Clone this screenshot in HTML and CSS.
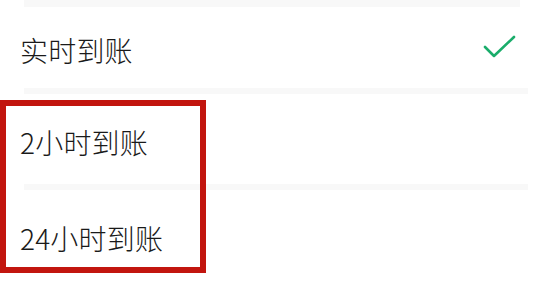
FILE: index.html
```html
<!DOCTYPE html>
<html lang="zh">
<head>
<meta charset="utf-8">
<link rel="stylesheet" href="styles.css">
</head>
<body>
<div class="page">
  <div class="sep sep-top"></div>
  <div class="row row-first">
    <span class="label">实时到账</span>
    <svg class="check" width="34" height="24" viewBox="0 0 34 24"><path d="M3 12 L12 21 L32 2" fill="none" stroke="#1aad6b" stroke-width="2.6" stroke-linecap="round" stroke-linejoin="round"/></svg>
  </div>
  <div class="sep sep-wide"></div>
  <div class="row">
    <span class="label">2小时到账</span>
  </div>
  <div class="sep sep-wide"></div>
  <div class="row">
    <span class="label">24小时到账</span>
  </div>
  <div class="highlight"></div>
</div>
</body>
</html>
```
FILE: styles.css
```css
html, body {
  margin: 0;
  padding: 0;
  background: #ffffff;
}
.page {
  position: relative;
  width: 550px;
  height: 282px;
  overflow: hidden;
  font-family: "Noto Sans CJK SC", "Noto Sans", sans-serif;
  color: #1a1a1a;
}
.sep {
  height: 7px;
  background: #f8f8f8;
  margin-left: 24px;
}
.sep-top {
  margin-right: 30px;
}
.sep-wide {
  margin-right: 22px;
  height: 6px;
}
.row {
  height: 90px;
  display: flex;
  align-items: center;
  justify-content: space-between;
  padding: 6px 34px 0 20px;
  box-sizing: border-box;
}
.row-first {
  height: 81px;
  padding-top: 4px;
}
.label {
  font-size: 28px;
  font-weight: 300;
  line-height: 1;
  letter-spacing: 0.2px;
}
.check {
  display: block;
  margin-top: -6px;
}
.highlight {
  position: absolute;
  left: 0;
  top: 100px;
  width: 206px;
  height: 173px;
  box-sizing: border-box;
  border: 6px solid #c2150e;
}
```
